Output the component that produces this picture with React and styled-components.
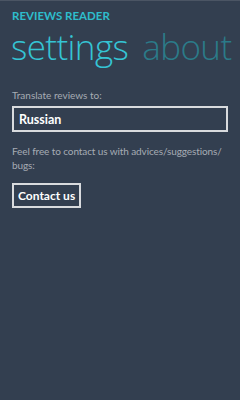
import React from "react";
import styled, { createGlobalStyle } from "styled-components";

const Global = createGlobalStyle`
  html, body {
    margin: 0;
    padding: 0;
    background: #333f50;
  }
  body {
    font-family: Lato, "Open Sans", sans-serif;
  }
`;

const Page = styled.div`
  width: 240px;
  height: 400px;
  box-sizing: border-box;
  border-top: 1px solid #4b5564;
  background: #333f50;
  padding: 8px 12px 0;
  display: flex;
  flex-direction: column;
`;

const AppTitle = styled.div`
  font-size: 11.5px;
  font-weight: 700;
  color: #2ebdcc;
  line-height: 14px;
`;

const Pivot = styled.div`
  display: flex;
  gap: 14px;
  margin-left: -1px;
  margin-top: 3px;
  white-space: nowrap;
`;

const PivotItem = styled.span`
  font-family: "Open Sans", sans-serif;
  font-size: 35px;
  font-weight: 300;
  line-height: 42px;
  letter-spacing: -0.6px;
  color: ${(p) => (p.$active ? "#35c4d4" : "#2b7b89")};
`;

const Content = styled.div`
  margin-top: 20px;
  display: flex;
  flex-direction: column;
`;

const Label = styled.div`
  font-size: 10px;
  color: #a6acb4;
  line-height: 14px;
`;

const Field = styled.div`
  margin-top: 4px;
  height: 26px;
  box-sizing: border-box;
  border: 2px solid #d9dbde;
  display: flex;
  align-items: center;
  padding-left: 5px;
  font-size: 12.5px;
  font-weight: 700;
  color: #ffffff;
`;

const Note = styled(Label)`
  margin-top: 12px;
  line-height: 14px;
  letter-spacing: -0.1px;
`;

const Button = styled.button`
  margin-top: 11px;
  align-self: flex-start;
  height: 25px;
  box-sizing: border-box;
  border: 2px solid #d9dbde;
  background: transparent;
  color: #ffffff;
  font-family: inherit;
  font-size: 12px;
  font-weight: 700;
  padding: 0 4px;
`;

export default function App() {
  return (
    <>
      <Global />
      <Page>
        <AppTitle>REVIEWS READER</AppTitle>
        <Pivot>
          <PivotItem $active>settings</PivotItem>
          <PivotItem>about</PivotItem>
        </Pivot>
        <Content>
          <Label>Translate reviews to:</Label>
          <Field>Russian</Field>
          <Note>Feel free to contact us with advices/suggestions/ bugs:</Note>
          <Button>Contact us</Button>
        </Content>
      </Page>
    </>
  );
}
